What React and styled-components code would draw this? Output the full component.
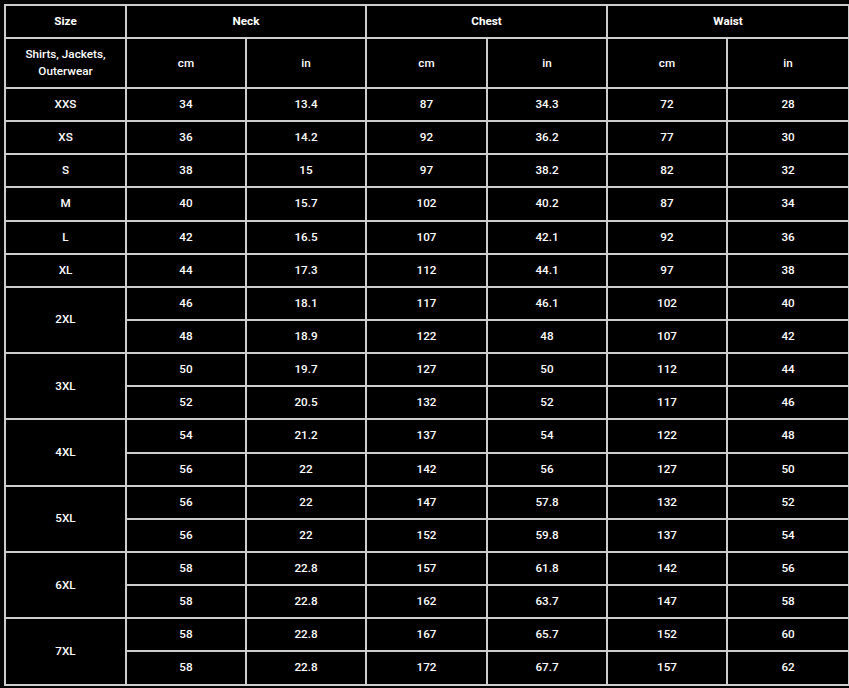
import React from 'react';
import styled, { createGlobalStyle } from 'styled-components';

const GlobalStyle = createGlobalStyle`
  html, body {
    margin: 0;
    padding: 0;
    background: #050505;
  }
  body {
    padding: 4px;
    font-family: Roboto, "Liberation Sans", Arial, sans-serif;
  }
`;

const Table = styled.table`
  width: 844px;
  table-layout: fixed;
  border-collapse: collapse;
  background: #000;
  color: #fff;
  font-size: 11.7px;
  border: 2px solid #cdcdcd;
`;

const Cell = styled.td`
  border: 2px solid #cdcdcd;
  text-align: center;
  vertical-align: middle;
  padding: 0 4px;
  line-height: 17px;
  height: ${({ $h }) => $h || 31}px;
  font-weight: ${({ $bold }) => ($bold ? 700 : 500)};
`;

const HeadCell = styled(Cell).attrs({ as: 'th' })``;

const sizes = [
  { size: 'XXS', rows: [[34, 13.4, 87, 34.3, 72, 28]] },
  { size: 'XS', rows: [[36, 14.2, 92, 36.2, 77, 30]] },
  { size: 'S', rows: [[38, 15, 97, 38.2, 82, 32]] },
  { size: 'M', rows: [[40, 15.7, 102, 40.2, 87, 34]] },
  { size: 'L', rows: [[42, 16.5, 107, 42.1, 92, 36]] },
  { size: 'XL', rows: [[44, 17.3, 112, 44.1, 97, 38]] },
  { size: '2XL', rows: [[46, 18.1, 117, 46.1, 102, 40], [48, 18.9, 122, 48, 107, 42]] },
  { size: '3XL', rows: [[50, 19.7, 127, 50, 112, 44], [52, 20.5, 132, 52, 117, 46]] },
  { size: '4XL', rows: [[54, 21.2, 137, 54, 122, 48], [56, 22, 142, 56, 127, 50]] },
  { size: '5XL', rows: [[56, 22, 147, 57.8, 132, 52], [56, 22, 152, 59.8, 137, 54]] },
  { size: '6XL', rows: [[58, 22.8, 157, 61.8, 142, 56], [58, 22.8, 162, 63.7, 147, 58]] },
  { size: '7XL', rows: [[58, 22.8, 167, 65.7, 152, 60], [58, 22.8, 172, 67.7, 157, 62]] },
];

const widths = [121, 120, 120, 121, 120, 120, 122];

export default function App() {
  return (
    <>
      <GlobalStyle />
      <Table>
        <colgroup>
          {widths.map((w, i) => (
            <col key={i} style={{ width: w }} />
          ))}
        </colgroup>
        <thead>
          <tr>
            <HeadCell $bold $h={28}>Size</HeadCell>
            <HeadCell $bold colSpan={2}>Neck</HeadCell>
            <HeadCell $bold colSpan={2}>Chest</HeadCell>
            <HeadCell $bold colSpan={2}>Waist</HeadCell>
          </tr>
          <tr>
            <Cell $h={48}>Shirts, Jackets,<br />Outerwear</Cell>
            <Cell>cm</Cell>
            <Cell>in</Cell>
            <Cell>cm</Cell>
            <Cell>in</Cell>
            <Cell>cm</Cell>
            <Cell>in</Cell>
          </tr>
        </thead>
        <tbody>
          {sizes.map((s) =>
            s.rows.map((r, i) => (
              <tr key={s.size + i}>
                {i === 0 && <Cell rowSpan={s.rows.length}>{s.size}</Cell>}
                {r.map((v, j) => (
                  <Cell key={j} $h={31.15}>{v}</Cell>
                ))}
              </tr>
            ))
          )}
        </tbody>
      </Table>
    </>
  );
}
